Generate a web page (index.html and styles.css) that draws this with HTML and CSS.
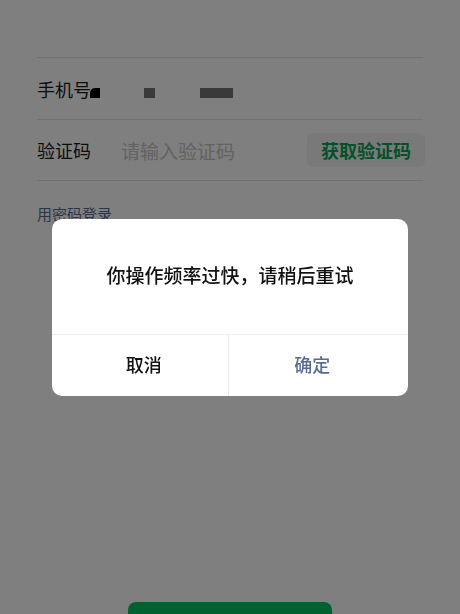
FILE: index.html
```html
<!DOCTYPE html>
<html lang="zh-CN">
<head>
<meta charset="utf-8">
<title>登录</title>
<link rel="stylesheet" href="styles.css">
</head>
<body>
<div class="page">
  <div class="form">
    <div class="row">
      <span class="label">手机号</span>
      <span class="phone">
        <span class="mark mark-a"></span>
        <span class="mark mark-b"></span>
        <span class="mark mark-c"></span>
      </span>
    </div>
    <div class="row">
      <span class="label">验证码</span>
      <span class="placeholder">请输入验证码</span>
      <span class="code-btn">获取验证码</span>
    </div>
    <div class="switch">用密码登录</div>
  </div>
  <div class="submit-wrap"><div class="submit"></div></div>
</div>
<div class="mask">
  <div class="dialog">
    <div class="msg">你操作频率过快，请稍后重试</div>
    <div class="actions">
      <div class="btn cancel">取消</div>
      <div class="btn ok">确定</div>
    </div>
  </div>
</div>
</body>
</html>
```
FILE: styles.css
```css
html, body {
  margin: 0;
  padding: 0;
  background: #ffffff;
  font-family: "Noto Sans CJK SC", "Noto Sans", sans-serif;
}
.page {
  height: 614px;
  overflow: hidden;
  display: flex;
  flex-direction: column;
}
.form {
  padding: 57px 37px 0 37px;
}
.row {
  display: flex;
  align-items: center;
  height: 61px;
  border-top: 1px solid #e4e4e4;
}
.row:nth-child(2) {
  height: 60px;
  border-bottom: 1px solid #e4e4e4;
}
.label {
  width: 84px;
  font-size: 18px;
  color: #1a1a1a;
  flex: none;
}
.phone {
  display: flex;
  align-items: center;
  height: 20px;
  flex: 1;
}
.mark {
  display: block;
  height: 10px;
  background: #747474;
}
.mark-a {
  width: 10px;
  background: #000;
  margin-left: -31px;
  margin-top: 8px;
  border-top-left-radius: 5px;
}
.mark-b {
  width: 11px;
  margin-left: 44px;
  margin-top: 8px;
}
.mark-c {
  width: 33px;
  margin-left: 45px;
  margin-top: 8px;
}
.placeholder {
  flex: 1;
  font-size: 19px;
  color: #c4c4c4;
}
.code-btn {
  width: 118px;
  height: 34px;
  margin-right: -2px;
  border-radius: 6px;
  background: #f3f3f3;
  color: #07a352;
  font-size: 18px;
  font-weight: 600;
  display: flex;
  align-items: center;
  justify-content: center;
}
.switch {
  margin-top: 22px;
  font-size: 15px;
  color: #576b95;
}
.submit-wrap {
  margin-top: auto;
  display: flex;
  justify-content: center;
}
.submit {
  width: 204px;
  height: 44px;
  margin-bottom: -32px;
  border-radius: 8px;
  background: #07c160;
}
.mask {
  position: fixed;
  inset: 0;
  background: rgba(0, 0, 0, 0.5);
  display: flex;
  align-items: center;
  justify-content: center;
}
.dialog {
  width: 356px;
  background: #fff;
  border-radius: 10px;
  overflow: hidden;
}
.msg {
  height: 116px;
  display: flex;
  align-items: center;
  justify-content: center;
  padding-bottom: 4px;
  font-size: 19px;
  font-weight: 500;
  color: #111;
  border-bottom: 1px solid #ececec;
  box-sizing: border-box;
}
.actions {
  display: flex;
  height: 61px;
}
.btn {
  flex: 1;
  display: flex;
  align-items: center;
  justify-content: center;
  padding-bottom: 3px;
  font-size: 18px;
  font-weight: 500;
}
.cancel {
  color: #111;
  border-right: 1px solid #ececec;
  padding-left: 8px;
}
.ok {
  color: #576b95;
  padding-right: 12px;
}
```
